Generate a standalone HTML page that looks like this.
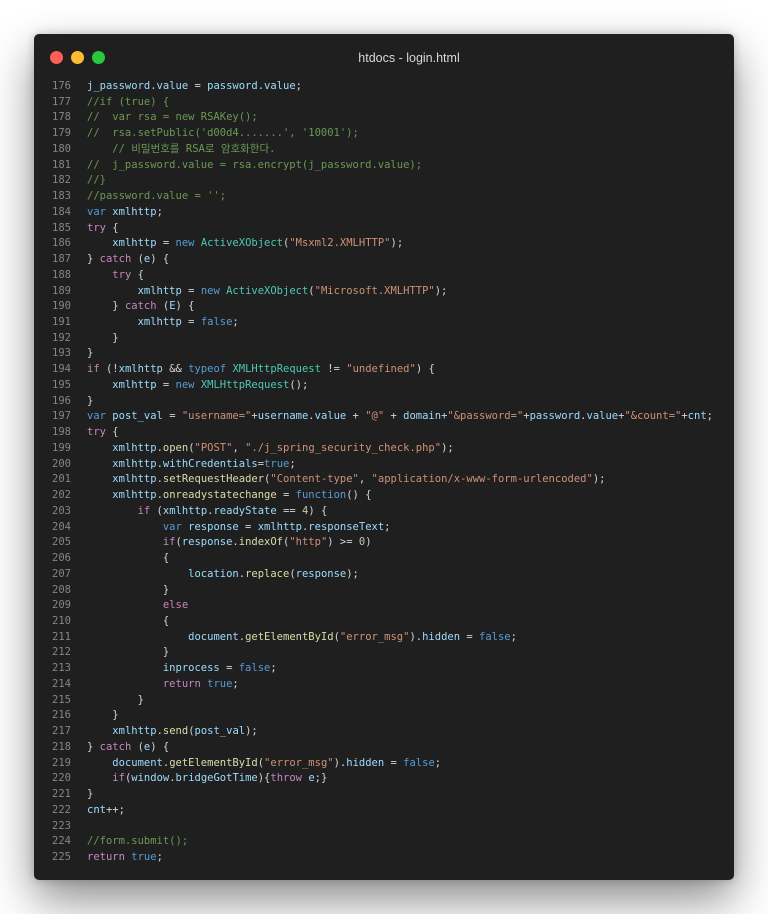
<!DOCTYPE html>
<html><head><meta charset="utf-8"><style>
body{margin:0;width:768px;height:914px;background:#fff;overflow:hidden;font-family:"Liberation Sans",sans-serif}
.win{position:absolute;left:34px;top:34px;width:700px;height:846px;background:#1f1f1f;border-radius:5px;box-shadow:0 20px 45px rgba(0,0,0,.45),0 0 10px rgba(0,0,0,.2)}
.dot{position:absolute;top:17px;width:13px;height:13px;border-radius:50%}
.title{position:absolute;top:17px;left:0;right:0;text-align:center;color:#d8d8d8;font-size:12.5px;padding-left:50px}
pre{position:absolute;left:0;top:45px;margin:0;font-family:"DejaVu Sans Mono","Noto Sans CJK KR",monospace;font-size:10.5px;line-height:15.73px;color:#d4d4d4}
.n{display:inline-block;width:37px;text-align:right;color:#858585;margin-right:16px}
.v{color:#9cdcfe}.k{color:#569cd6}.c{color:#c586c0}.s{color:#ce9178}.g{color:#6a9955}.f{color:#dcdcaa}.t{color:#4ec9b0}.m{color:#b5cea8}
</style></head><body>
<div class="win">
<div class="dot" style="left:16px;background:#fe5f57"></div>
<div class="dot" style="left:37px;background:#febc2e"></div>
<div class="dot" style="left:58px;background:#28c840"></div>
<div class="title">htdocs - login.html</div>
<pre><span class="n">176</span><span class="v">j_password</span>.<span class="v">value</span> = <span class="v">password</span>.<span class="v">value</span>;
<span class="n">177</span><span class="g">//if (true) {</span>
<span class="n">178</span><span class="g">//  var rsa = new RSAKey();</span>
<span class="n">179</span><span class="g">//  rsa.setPublic('d00d4.......', '10001');</span>
<span class="n">180</span><span class="g">    // 비밀번호를 RSA로 암호화한다.</span>
<span class="n">181</span><span class="g">//  j_password.value = rsa.encrypt(j_password.value);</span>
<span class="n">182</span><span class="g">//}</span>
<span class="n">183</span><span class="g">//password.value = '';</span>
<span class="n">184</span><span class="k">var</span> <span class="v">xmlhttp</span>;
<span class="n">185</span><span class="c">try</span> {
<span class="n">186</span>    <span class="v">xmlhttp</span> = <span class="k">new</span> <span class="t">ActiveXObject</span>(<span class="s">"Msxml2.XMLHTTP"</span>);
<span class="n">187</span>} <span class="c">catch</span> (<span class="v">e</span>) {
<span class="n">188</span>    <span class="c">try</span> {
<span class="n">189</span>        <span class="v">xmlhttp</span> = <span class="k">new</span> <span class="t">ActiveXObject</span>(<span class="s">"Microsoft.XMLHTTP"</span>);
<span class="n">190</span>    } <span class="c">catch</span> (<span class="v">E</span>) {
<span class="n">191</span>        <span class="v">xmlhttp</span> = <span class="k">false</span>;
<span class="n">192</span>    }
<span class="n">193</span>}
<span class="n">194</span><span class="c">if</span> (!<span class="v">xmlhttp</span> &amp;&amp; <span class="k">typeof</span> <span class="t">XMLHttpRequest</span> != <span class="s">"undefined"</span>) {
<span class="n">195</span>    <span class="v">xmlhttp</span> = <span class="k">new</span> <span class="t">XMLHttpRequest</span>();
<span class="n">196</span>}
<span class="n">197</span><span class="k">var</span> <span class="v">post_val</span> = <span class="s">"username="</span>+<span class="v">username</span>.<span class="v">value</span> + <span class="s">"@"</span> + <span class="v">domain</span>+<span class="s">"&amp;password="</span>+<span class="v">password</span>.<span class="v">value</span>+<span class="s">"&amp;count="</span>+<span class="v">cnt</span>;
<span class="n">198</span><span class="c">try</span> {
<span class="n">199</span>    <span class="v">xmlhttp</span>.<span class="f">open</span>(<span class="s">"POST"</span>, <span class="s">"./j_spring_security_check.php"</span>);
<span class="n">200</span>    <span class="v">xmlhttp</span>.<span class="v">withCredentials</span>=<span class="k">true</span>;
<span class="n">201</span>    <span class="v">xmlhttp</span>.<span class="f">setRequestHeader</span>(<span class="s">"Content-type"</span>, <span class="s">"application/x-www-form-urlencoded"</span>);
<span class="n">202</span>    <span class="v">xmlhttp</span>.<span class="f">onreadystatechange</span> = <span class="k">function</span>() {
<span class="n">203</span>        <span class="c">if</span> (<span class="v">xmlhttp</span>.<span class="v">readyState</span> == <span class="m">4</span>) {
<span class="n">204</span>            <span class="k">var</span> <span class="v">response</span> = <span class="v">xmlhttp</span>.<span class="v">responseText</span>;
<span class="n">205</span>            <span class="c">if</span>(<span class="v">response</span>.<span class="f">indexOf</span>(<span class="s">"http"</span>) &gt;= <span class="m">0</span>)
<span class="n">206</span>            {
<span class="n">207</span>                <span class="v">location</span>.<span class="f">replace</span>(<span class="v">response</span>);
<span class="n">208</span>            }
<span class="n">209</span>            <span class="c">else</span>
<span class="n">210</span>            {
<span class="n">211</span>                <span class="v">document</span>.<span class="f">getElementById</span>(<span class="s">"error_msg"</span>).<span class="v">hidden</span> = <span class="k">false</span>;
<span class="n">212</span>            }
<span class="n">213</span>            <span class="v">inprocess</span> = <span class="k">false</span>;
<span class="n">214</span>            <span class="c">return</span> <span class="k">true</span>;
<span class="n">215</span>        }
<span class="n">216</span>    }
<span class="n">217</span>    <span class="v">xmlhttp</span>.<span class="f">send</span>(<span class="v">post_val</span>);
<span class="n">218</span>} <span class="c">catch</span> (<span class="v">e</span>) {
<span class="n">219</span>    <span class="v">document</span>.<span class="f">getElementById</span>(<span class="s">"error_msg"</span>).<span class="v">hidden</span> = <span class="k">false</span>;
<span class="n">220</span>    <span class="c">if</span>(<span class="v">window</span>.<span class="v">bridgeGotTime</span>){<span class="c">throw</span> <span class="v">e</span>;}
<span class="n">221</span>}
<span class="n">222</span><span class="v">cnt</span>++;
<span class="n">223</span>
<span class="n">224</span><span class="g">//form.submit();</span>
<span class="n">225</span><span class="c">return</span> <span class="k">true</span>;</pre>
</div>
</body></html>
